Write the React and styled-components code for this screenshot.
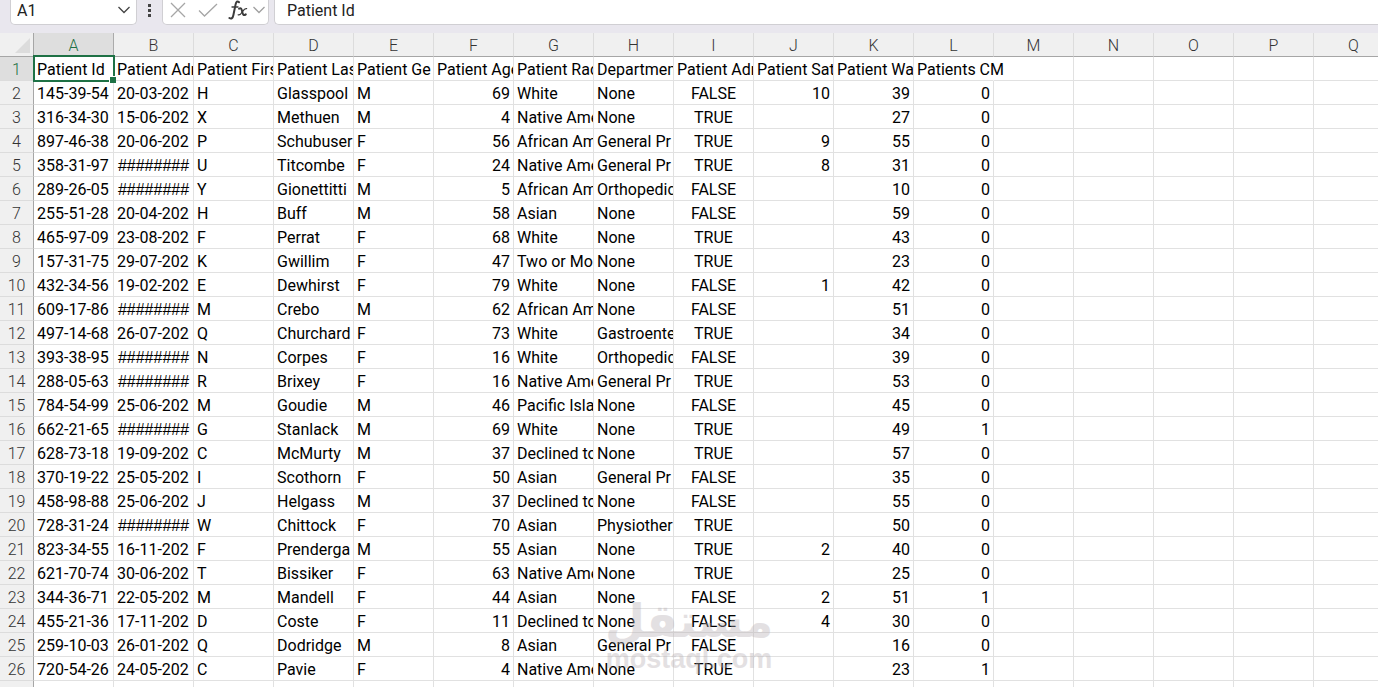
import { useState } from "react";
import styled, { createGlobalStyle, css } from "styled-components";

const GlobalStyle = createGlobalStyle`
  * {
    box-sizing: border-box;
  }
  body {
    margin: 0;
    overflow: hidden;
    background-color: #fff;
    font-family: Roboto, "Liberation Sans", sans-serif;
    font-size: 16px;
    color: #000;
  }
`;

const Page = styled.div`
  position: relative;
  height: 100vh;
  overflow: hidden;
`;

const FormulaBar = styled.div`
  display: flex;
  align-items: flex-start;
  height: 33px;
  padding-left: 10px;
  background-color: #e9e7ee;
`;

const Box = styled.div`
  display: flex;
  align-items: center;
  height: 25px;
  padding-bottom: 4px;
  background-color: #fff;
  border: 1px solid #d0cfd3;
  border-top: 0;
  border-radius: 0 0 5px 5px;
`;

const NameBox = styled(Box)`
  width: 127px;
`;

const ToolBox = styled(Box)`
  width: 107px;
  margin-right: 5px;
`;

const ValueBox = styled(Box)`
  flex: 1;
  border-right: 0;
  border-radius: 0 0 0 5px;
`;

const TextInput = styled.input`
  flex: 1;
  min-width: 0;
  padding: 0 0 0 ${({ $indent }) => $indent}px;
  border: 0;
  outline: 0;
  background: transparent;
  font: inherit;
  color: #222;
`;

const IconButton = styled.button`
  display: flex;
  align-items: center;
  justify-content: center;
  width: ${({ $width }) => $width}px;
  height: 20px;
  padding: 0;
  border: 0;
  background: transparent;
  cursor: pointer;
`;

const Grip = styled.div`
  display: flex;
  flex-direction: column;
  align-items: center;
  gap: 2px;
  width: 25px;
  padding-top: 4px;
`;

const Dot = styled.span`
  width: 3px;
  height: 3px;
  background-color: #444;
`;

const Sheet = styled.table`
  width: 1394px;
  table-layout: fixed;
  border-collapse: separate;
  border-spacing: 0;
`;

const HeadCol = styled.col`
  width: 34px;
`;

const Corner = styled.td`
  height: 24px;
  padding: 0 3px 3px 0;
  vertical-align: bottom;
  background-color: #f0f0f0;
  border-right: 1px solid #a6a6a6;
  border-bottom: 1px solid #a6a6a6;

  svg {
    display: block;
    margin-left: auto;
  }
`;

const heading = css`
  height: 24px;
  padding: 2px 0 0;
  font-weight: 300;
  text-align: center;
  line-height: 21px;
  color: ${({ $active }) => ($active ? "#1e7145" : "#333")};
  background-color: ${({ $active }) => ($active ? "#dedede" : "#f0f0f0")};
`;

const ColHead = styled.th`
  ${heading}
  border-right: 1px solid ${({ $active }) => ($active ? "#ababab" : "#dcdcdc")};
  border-bottom: 1px solid #a6a6a6;
`;

const RowHead = styled.th`
  ${heading}
  border-right: 1px solid #a6a6a6;
  border-bottom: 1px solid #dcdcdc;
`;

const Cell = styled.td`
  position: relative;
  height: 24px;
  padding: 2px 3px 0;
  line-height: 21px;
  white-space: nowrap;
  overflow: ${({ $spill }) => ($spill ? "visible" : "hidden")};
  text-align: ${({ $align }) => $align || "left"};
  border-right: 1px solid ${({ $spill }) => ($spill ? "transparent" : "#e1e1e1")};
  border-bottom: 1px solid #e1e1e1;
`;

// a date that does not fit its column
const Hashes = styled.span`
  display: block;
  text-align: center;
  font-family: "Liberation Sans", sans-serif;
`;

const Selection = styled.div`
  position: absolute;
  z-index: 1;
  top: -2px;
  left: -1px;
  width: 82px;
  height: 27px;
  border: 2px solid #1e7145;
  pointer-events: none;

  &::after {
    content: "";
    position: absolute;
    right: -3px;
    bottom: -3px;
    width: 6px;
    height: 6px;
    background-color: #1e7145;
    border-top: 1px solid #fff;
    border-left: 1px solid #fff;
  }
`;

const Watermark = styled.div`
  position: absolute;
  left: 0;
  right: 0;
  bottom: 16px;
  text-align: center;
  color: #b8b0b4;
  opacity: 0.38;
  pointer-events: none;
`;

const MarkName = styled.div`
  font: bold 46px/52px "DejaVu Sans", sans-serif;
`;

const MarkDomain = styled.div`
  font: bold 27px/24px "Liberation Sans", sans-serif;
`;

const columns = "ABCDEFGHIJKLMNOPQ".split("");
const numeric = ["F", "J", "K", "L"];

const titles = [
  "Patient Id",
  "Patient Adm",
  "Patient First",
  "Patient Last",
  "Patient Ge",
  "Patient Age",
  "Patient Rac",
  "Department",
  "Patient Adm",
  "Patient Sat",
  "Patient Wa",
  "Patients CM",
];

const hashes = "########";

const patients = [
  ["145-39-54", "20-03-202", "H", "Glasspool", "M", 69, "White", "None", "FALSE", 10, 39, 0],
  ["316-34-30", "15-06-202", "X", "Methuen", "M", 4, "Native Ame", "None", "TRUE", "", 27, 0],
  ["897-46-38", "20-06-202", "P", "Schubuser", "F", 56, "African Am", "General Pr", "TRUE", 9, 55, 0],
  ["358-31-97", hashes, "U", "Titcombe", "F", 24, "Native Ame", "General Pr", "TRUE", 8, 31, 0],
  ["289-26-05", hashes, "Y", "Gionettitti", "M", 5, "African Am", "Orthopedic", "FALSE", "", 10, 0],
  ["255-51-28", "20-04-202", "H", "Buff", "M", 58, "Asian", "None", "FALSE", "", 59, 0],
  ["465-97-09", "23-08-202", "F", "Perrat", "F", 68, "White", "None", "TRUE", "", 43, 0],
  ["157-31-75", "29-07-202", "K", "Gwillim", "F", 47, "Two or Mor", "None", "TRUE", "", 23, 0],
  ["432-34-56", "19-02-202", "E", "Dewhirst", "F", 79, "White", "None", "FALSE", 1, 42, 0],
  ["609-17-86", hashes, "M", "Crebo", "M", 62, "African Am", "None", "FALSE", "", 51, 0],
  ["497-14-68", "26-07-202", "Q", "Churchard", "F", 73, "White", "Gastroente", "TRUE", "", 34, 0],
  ["393-38-95", hashes, "N", "Corpes", "F", 16, "White", "Orthopedic", "FALSE", "", 39, 0],
  ["288-05-63", hashes, "R", "Brixey", "F", 16, "Native Ame", "General Pr", "TRUE", "", 53, 0],
  ["784-54-99", "25-06-202", "M", "Goudie", "M", 46, "Pacific Isla", "None", "FALSE", "", 45, 0],
  ["662-21-65", hashes, "G", "Stanlack", "M", 69, "White", "None", "TRUE", "", 49, 1],
  ["628-73-18", "19-09-202", "C", "McMurty", "M", 37, "Declined to", "None", "TRUE", "", 57, 0],
  ["370-19-22", "25-05-202", "I", "Scothorn", "F", 50, "Asian", "General Pr", "FALSE", "", 35, 0],
  ["458-98-88", "25-06-202", "J", "Helgass", "M", 37, "Declined to", "None", "FALSE", "", 55, 0],
  ["728-31-24", hashes, "W", "Chittock", "F", 70, "Asian", "Physiother", "TRUE", "", 50, 0],
  ["823-34-55", "16-11-202", "F", "Prenderga", "M", 55, "Asian", "None", "TRUE", 2, 40, 0],
  ["621-70-74", "30-06-202", "T", "Bissiker", "F", 63, "Native Ame", "None", "TRUE", "", 25, 0],
  ["344-36-71", "22-05-202", "M", "Mandell", "F", 44, "Asian", "None", "FALSE", 2, 51, 1],
  ["455-21-36", "17-11-202", "D", "Coste", "F", 11, "Declined to", "None", "FALSE", 4, 30, 0],
  ["259-10-03", "26-01-202", "Q", "Dodridge", "M", 8, "Asian", "General Pr", "FALSE", "", 16, 0],
  ["720-54-26", "24-05-202", "C", "Pavie", "F", 4, "Native Ame", "None", "TRUE", "", 23, 1],
];

const alignOf = (column) => {
  if (numeric.includes(column)) return "right";
  return column === "I" ? "center" : "left";
};

const Chevron = ({ color }) => (
  <svg width="14" height="8" viewBox="0 0 14 8" fill="none" stroke={color} strokeWidth="1.3">
    <path d="M1.5 1 L7 6.5 L12.5 1" />
  </svg>
);

const TopBar = () => {
  const [name, setName] = useState("A1");
  const [value, setValue] = useState("Patient Id");

  return (
    <FormulaBar>
      <NameBox>
        <TextInput $indent={6} aria-label="Name box" value={name} onChange={(e) => setName(e.target.value)} />
        <IconButton $width={24} aria-label="Show names">
          <Chevron color="#444" />
        </IconButton>
      </NameBox>
      <Grip>
        <Dot />
        <Dot />
        <Dot />
      </Grip>
      <ToolBox>
        <IconButton $width={30} aria-label="Cancel">
          <svg width="16" height="16" viewBox="0 0 16 16" stroke="#a6a6a6" strokeWidth="1.3">
            <path d="M1 1 L15 15 M15 1 L1 15" />
          </svg>
        </IconButton>
        <IconButton $width={30} aria-label="Enter">
          <svg width="20" height="14" viewBox="0 0 20 14" fill="none" stroke="#a6a6a6" strokeWidth="1.3">
            <path d="M1 7.5 L6.5 13 L19 1" />
          </svg>
        </IconButton>
        <IconButton $width={29} aria-label="Insert function">
          <svg width="20" height="20" viewBox="0 0 20 20" fill="none" stroke="#3b3b3b" strokeLinecap="round">
            <path d="M11 2.2 C9.4 0.6 8.2 1.6 7.6 4.4 L5.4 15 C4.8 18 3.4 19.4 1.4 18" strokeWidth="2" />
            <path d="M4 7 H10" strokeWidth="1.3" />
            <path d="M11 8.8 C13 7.4 13.6 9 14.2 11.6 C14.8 14.6 15.6 16 17.8 14.4" strokeWidth="2" />
            <path d="M18.6 8.6 C16.4 8 15.4 10.4 14.2 12 C13 14 12 15.4 10.2 14.8" strokeWidth="1.3" />
          </svg>
        </IconButton>
        <IconButton $width={14} aria-label="More functions">
          <Chevron color="#a0a0a0" />
        </IconButton>
      </ToolBox>
      <ValueBox>
        <TextInput $indent={12} aria-label="Formula" value={value} onChange={(e) => setValue(e.target.value)} />
      </ValueBox>
    </FormulaBar>
  );
};

const Row = ({ number, values }) => (
  <tr>
    <RowHead scope="row" $active={number === 1}>
      {number}
    </RowHead>
    {columns.map((column, i) => {
      const value = values[i];
      const selected = number === 1 && column === "A";
      return (
        <Cell
          key={column}
          $align={number === 1 ? "left" : alignOf(column)}
          $spill={selected || (number === 1 && column === "L")}
        >
          {value === hashes ? <Hashes>{value}</Hashes> : value}
          {selected && <Selection />}
        </Cell>
      );
    })}
  </tr>
);

const App = () => {
  return (
    <Page>
      <GlobalStyle />
      <TopBar />
      <Sheet>
        <colgroup>
          <HeadCol />
          {columns.map((column) => (
            <col key={column} />
          ))}
        </colgroup>
        <thead>
          <tr>
            <Corner>
              <svg width="15" height="15" viewBox="0 0 15 15" fill="#dcdcdc">
                <path d="M15 0 V15 H0 Z" />
              </svg>
            </Corner>
            {columns.map((column) => (
              <ColHead key={column} scope="col" $active={column === "A"}>
                {column}
              </ColHead>
            ))}
          </tr>
        </thead>
        <tbody>
          <Row number={1} values={titles} />
          {patients.map((patient, i) => (
            <Row key={patient[0]} number={i + 2} values={patient} />
          ))}
          <Row values={[]} />
        </tbody>
      </Sheet>
      <Watermark>
        <MarkName lang="ar">مستقل</MarkName>
        <MarkDomain>mostaql.com</MarkDomain>
      </Watermark>
    </Page>
  );
};

export default App;
